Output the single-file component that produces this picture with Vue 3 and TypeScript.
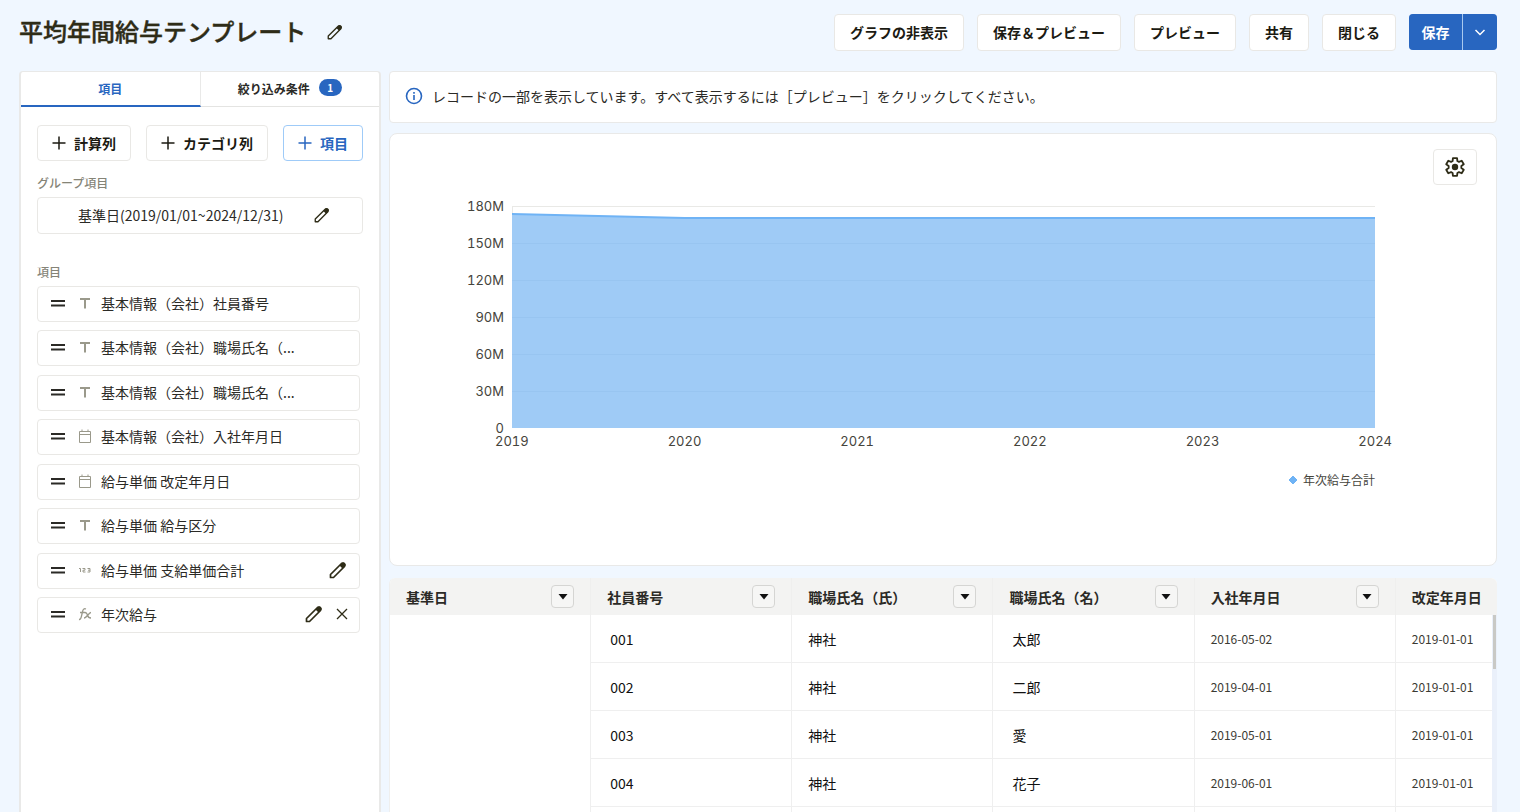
<script setup lang="ts">
type Kind = 'text' | 'date' | 'number' | 'formula'
interface Field { kind: Kind; label: string; edit?: boolean; remove?: boolean }

const fields: Field[] = [
  { kind: 'text', label: '基本情報（会社）社員番号' },
  { kind: 'text', label: '基本情報（会社）職場氏名（...' },
  { kind: 'text', label: '基本情報（会社）職場氏名（...' },
  { kind: 'date', label: '基本情報（会社）入社年月日' },
  { kind: 'date', label: '給与単価 改定年月日' },
  { kind: 'text', label: '給与単価 給与区分' },
  { kind: 'number', label: '給与単価 支給単価合計', edit: true },
  { kind: 'formula', label: '年次給与', edit: true, remove: true },
]

const actions = ['グラフの非表示', '保存＆プレビュー', 'プレビュー', '共有', '閉じる']
const columns = ['基準日', '社員番号', '職場氏名（氏）', '職場氏名（名）', '入社年月日', '改定年月日']
const rows = [
  ['001', '神社', '太郎', '2016-05-02', '2019-01-01'],
  ['002', '神社', '二郎', '2019-04-01', '2019-01-01'],
  ['003', '神社', '愛', '2019-05-01', '2019-01-01'],
  ['004', '神社', '花子', '2019-06-01', '2019-01-01'],
  ['', '', '', '', ''],
]
const yTicks = ['180M', '150M', '120M', '90M', '60M', '30M', '0']
const years = [2019, 2020, 2021, 2022, 2023, 2024]
const pencil = 'M2.500 17.500v-3L13.500 3.500a1.500 1.500 0 0 1 2 0l1 1a1.500 1.500 0 0 1 0 2L5.500 17.500z'
const eraser = 'M11.500 5.500l2.500-2.500a2 2 0 0 1 3 0a2 2 0 0 1 0 3l-2.500 2.500z'

// Outline of a six-toothed gear: outer pair and inner pair of points per tooth.
const gear = Array.from({ length: 6 }, (_, k) =>
  [[-22, 7], [-13, 10], [13, 10], [22, 7]].map(([offset, radius]) => {
    const angle = ((k * 60 + offset) * Math.PI) / 180
    return `${(12 + radius * Math.sin(angle)).toFixed(2)},${(12 - radius * Math.cos(angle)).toFixed(2)}`
  }).join(' '),
).join(' ')
</script>

<template>
  <div class="page">
    <header class="top">
      <h1>平均年間給与テンプレート</h1>
      <button class="bare" aria-label="名前を編集">
        <svg class="pen small" viewBox="0 0 20 20"><path :d="pencil" /><path class="tip" :d="eraser" /></svg>
      </button>
      <div class="actions">
        <button v-for="a in actions" :key="a" class="btn">{{ a }}</button>
        <div class="split">
          <button class="save">保存</button>
          <button class="more" aria-label="保存メニュー">
            <svg viewBox="0 0 12 12"><path d="M1.500 4l4.500 4.500L10.500 4" /></svg>
          </button>
        </div>
      </div>
    </header>

    <div class="body">
      <aside class="side">
        <div class="tabs" role="tablist">
          <button class="tab on" role="tab" aria-selected="true">項目</button>
          <button class="tab" role="tab" aria-selected="false">絞り込み条件<span class="badge">1</span></button>
        </div>
        <div class="side-body">
          <div class="adds">
            <button class="btn add"><svg viewBox="0 0 14 14"><path d="M7 .500v13M.500 7h13" /></svg>計算列</button>
            <button class="btn add"><svg viewBox="0 0 14 14"><path d="M7 .500v13M.500 7h13" /></svg>カテゴリ列</button>
            <button class="btn add primary"><svg viewBox="0 0 14 14"><path d="M7 .500v13M.500 7h13" /></svg>項目</button>
          </div>
          <h2>グループ項目</h2>
          <div class="group">
            <span>基準日(2019/01/01~2024/12/31)</span>
            <button class="bare" aria-label="グループ項目を編集">
              <svg class="pen small" viewBox="0 0 20 20"><path :d="pencil" /><path class="tip" :d="eraser" /></svg>
            </button>
          </div>
          <h2 class="second">項目</h2>
          <ul class="fields">
            <li v-for="(f, i) in fields" :key="i">
              <svg class="grip" viewBox="0 0 14 8"><path d="M0 2h14M0 6.500h14" /></svg>
              <svg v-if="f.kind === 'text'" class="kind" viewBox="0 0 14 14"><path class="thick" d="M2 3h10M7 3v9.500" /></svg>
              <svg v-else-if="f.kind === 'date'" class="kind" viewBox="0 0 14 14"><path d="M1.500 2.500h11v11h-11zM1.500 5.500h11M4 .500v2M10 .500v2" /></svg>
              <svg v-else-if="f.kind === 'number'" class="kind" viewBox="0 0 14 14"><path d="M1 5.500h1.500v3.500M4.500 5.500h2.500v1.700h-2v1.800h2.500M9.500 5.500h2.500v3.500h-2.500M10 7.200h2" /></svg>
              <svg v-else class="kind" viewBox="0 0 14 14"><path class="fx" d="M1 12.500c2 .300 2-1.500 2.500-3.500l1.200-5c.500-2 1.500-2.700 3.300-2M2 5.500h5.500M7 5.500c2 0 2 1 2.500 2.700s1 2.800 3.500 2.800M13 5.500c-2 0-4.500 5.500-7 5.500" /></svg>
              <span class="name">{{ f.label }}</span>
              <button v-if="f.edit" class="bare" aria-label="編集">
                <svg class="pen" viewBox="0 0 20 20"><path :d="pencil" /><path class="tip" :d="eraser" /></svg>
              </button>
              <button v-if="f.remove" class="bare" aria-label="削除">
                <svg class="cross" viewBox="0 0 12 12"><path d="M1 1l10 10M11 1L1 11" /></svg>
              </button>
            </li>
          </ul>
        </div>
      </aside>

      <main class="main">
        <div class="notice">
          <svg viewBox="0 0 18 18"><circle cx="9" cy="9" r="7.500" /><path d="M9 8v5M9 5v1.800" /></svg>
          <span>レコードの一部を表示しています。すべて表示するには［プレビュー］をクリックしてください。</span>
        </div>

        <section class="chart">
          <button class="gear" aria-label="グラフの設定">
            <svg viewBox="0 0 24 24"><polygon :points="gear" /><circle cx="12" cy="12" r="3.500" /></svg>
          </button>
          <div class="plot-row">
            <div class="y"><span v-for="t in yTicks" :key="t">{{ t }}</span></div>
            <svg class="plot" viewBox="0 0 864 222" preserveAspectRatio="none">
              <path class="grid" d="M0 .500h864M.500 0v222" />
              <path class="area" d="M0 8L173 12H864V222H0z" />
              <path class="inner" d="M0 37.500h864M0 74.500h864M0 111.500h864M0 148.500h864M0 185.500h864" />
              <path class="line" d="M0 8L173 12H864" />
            </svg>
          </div>
          <div class="x"><span v-for="y in years" :key="y">{{ y }}</span></div>
          <div class="legend">
            <svg viewBox="0 0 10 10"><path d="M5 1L9 5 5 9 1 5z" /></svg>年次給与合計
          </div>
        </section>

        <div class="table-wrap">
          <table>
            <thead>
              <tr>
                <th v-for="(c, i) in columns" :key="c" scope="col">
                  <div class="th">
                    {{ c }}
                    <button v-if="i < 5" class="menu" :aria-label="c + 'のメニュー'">
                      <svg viewBox="0 0 10 6"><path d="M.500 0h9L5 5.500z" /></svg>
                    </button>
                  </div>
                </th>
              </tr>
            </thead>
            <tbody>
              <tr v-for="(r, i) in rows" :key="i">
                <td v-if="i === 0" :rowspan="rows.length"></td>
                <td v-for="(c, j) in r" :key="j" :class="{ indent: j === 0 || j === 2, date: j > 2 }">{{ c }}</td>
              </tr>
            </tbody>
          </table>
          <div class="scroll"><div class="thumb"></div></div>
        </div>
      </main>
    </div>
  </div>
</template>

<style>
body { background: #f0f7ff; }
</style>

<style scoped>
* { box-sizing: border-box; }
.page {
  height: 100vh;
  overflow: hidden;
  display: flex;
  flex-direction: column;
  background: #f0f7ff;
  color: #2b2a26;
  font: 14px/20px "Noto Sans CJK JP", "Noto Sans", sans-serif;
}
button { font: inherit; color: inherit; cursor: pointer; padding: 0; }
svg { fill: none; stroke: currentColor; display: block; flex: none; }
.top { display: flex; align-items: center; padding: 14px 23px 0 19px; height: 50px; flex: none; }
h1 { margin: 0; font-size: 24px; line-height: 36px; padding-bottom: 2px; font-weight: 500; color: #2e2c17; -webkit-text-stroke: 0.4px; }
.bare { border: 0; background: none; color: #2e2c17; }
.top .bare { margin-left: 20px; }
.pen { width: 20px; height: 20px; stroke-width: 1.7; stroke-linejoin: round; }
.pen.small { width: 18px; height: 18px; stroke-width: 1.5; }
.tip { fill: currentColor; stroke: none; }
.actions { display: flex; gap: 13px; margin-left: auto; }
.btn {
  height: 37px;
  padding: 0 15px;
  border: 1px solid #e9e8e5;
  border-radius: 4px;
  background: #fff;
  color: #1b1a12;
  font-weight: 700;
  white-space: nowrap;
}
.split { display: flex; height: 36px; border-radius: 4px; overflow: hidden; gap: 1px; background: #a9c9ef; color: #fff; font-weight: 700; }
.split button { border: 0; background: #2866c0; }
.save { width: 53px; }
.more { width: 34px; display: grid; place-items: center; }
.more svg { width: 12px; height: 12px; stroke-width: 1.5; }

.body { flex: 1; min-height: 0; display: flex; gap: 8px; padding: 21px 23px 0 19px; }
.side { width: 362px; flex: none; background: #fff; border: 1px solid #e9e9e8; border-width: 1px 2px 0; border-radius: 4px 4px 0 0; }
.tabs { display: flex; height: 35px; }
.tab { flex: 1; display: flex; align-items: center; justify-content: center; gap: 9px; border: 0; border-bottom: 1px solid #e4e4e2; background: none; font-size: 12px; font-weight: 700; }
.tab.on { color: #2866c0; border-bottom: 2px solid #2866c0; border-right: 1px solid #e9e9e8; }
.badge { width: 23px; height: 17px; border-radius: 9px; background: #2866c0; color: #fff; font-size: 10px; line-height: 17px; margin-top: -3px; }
.side-body { padding: 18px 16px 0; }
.adds { display: flex; justify-content: space-between; }
.add { display: flex; align-items: center; gap: 8px; height: 36px; padding: 0 14px; }
.add svg { width: 14px; height: 14px; stroke-width: 1.5; }
.primary { color: #2866c0; border-color: #9fcbf8; }
h2 { margin: 12px 0 4px; font-size: 12px; line-height: 20px; font-weight: 500; color: #858477; }
h2.second { margin: 28px 0 4px; }
.group { display: flex; align-items: center; height: 37px; padding: 0 31px 2px 40px; border: 1px solid #e9e8e5; border-radius: 4px; justify-content: space-between; }
.fields { list-style: none; margin: 0 3px 0 0; padding: 0; height: 347px; display: flex; flex-direction: column; justify-content: space-between; }
.fields li { display: flex; align-items: center; height: 36px; padding: 0 11px 2px 13px; border: 1px solid #e9e8e5; border-radius: 4px; }
.grip { width: 14px; height: 8px; stroke-width: 2; }
.kind { width: 14px; height: 14px; margin: 0 9px 0 13px; color: #9a998b; }
.kind .thick { stroke-width: 2; }
.kind .fx { stroke-width: 1.3; }
.name { flex: 1; white-space: nowrap; }
.fields .bare + .bare { margin-left: 12px; }
.cross { width: 12px; height: 12px; stroke-width: 1.3; }

.main { flex: 1; min-width: 0; display: flex; flex-direction: column; }
.notice { display: flex; align-items: center; gap: 9px; height: 52px; flex: none; padding: 0 15px 2px; background: #fff; border: 1px solid #e9e9e8; border-radius: 4px; }
.notice svg { width: 18px; height: 18px; color: #2866c0; stroke-width: 1.6; }
.chart { position: relative; margin-top: 10px; height: 433px; flex: none; background: #fff; border: 1px solid #e9e9e8; border-radius: 8px; padding: 72px 121px 0 70px; }
.gear { position: absolute; right: 19px; top: 15px; width: 44px; height: 36px; border: 1px solid #e9e8e5; border-radius: 4px; background: #fff; display: grid; place-items: center; color: #2e2c17; }
.gear svg { width: 22px; height: 22px; stroke-width: 2; stroke-linejoin: round; }
.gear circle { fill: currentColor; stroke: none; }
.plot-row { display: flex; gap: 8px; }
.y { width: 44px; display: flex; flex-direction: column; justify-content: space-between; margin: -10px 0; text-align: right; }
.y, .x { font-family: Inter, "Noto Sans", sans-serif; font-size: 13px; font-feature-settings: "tnum"; color: #45443c; }
.plot { flex: 1; min-width: 0; height: 222px; }
.grid { stroke: #e9e9e6; }
.area { fill: #9fcbf6; stroke: none; }
.inner { stroke: #98c5f1; }
.line { stroke: #6fb3f5; stroke-width: 2; }
.x { display: flex; justify-content: space-between; margin: 3px -17px 0 35px; }
.legend { display: flex; justify-content: flex-end; align-items: center; gap: 5px; margin-top: 19px; font-size: 12px; color: #45443c; }
.legend svg { width: 10px; height: 10px; fill: #6fb3f5; stroke: #6fb3f5; stroke-linejoin: round; }

.table-wrap { position: relative; margin-top: 12px; flex: 1; min-height: 0; overflow: hidden; border-radius: 6px 6px 0 0; background: #fff; border-left: 1px solid #efefee; }
table { width: calc(100% + 100px); table-layout: fixed; border-collapse: separate; border-spacing: 0; }
th { height: 37px; padding: 0 16px; background: #f3f3f2; border-right: 1px solid #efefee; text-align: left; font-weight: 700; }
.th { display: flex; align-items: center; justify-content: space-between; white-space: nowrap; }
.menu { width: 23px; height: 23px; border: 1px solid #d5d5d3; border-radius: 4px; background: #f6f6f5; display: grid; place-items: center; color: #111; }
.menu svg { width: 10px; height: 6px; fill: currentColor; stroke: none; }
td { height: 48px; padding: 0 16px; border-right: 1px solid #efefef; border-bottom: 1px solid #efefef; color: #111; }
td.indent { padding-left: 19px; }
td.date { font-size: 12px; color: #3b3a33; }
.scroll { position: absolute; top: 37px; right: 0; bottom: 0; width: 5px; background: #eaf0fa; }
.thumb { width: 3px; height: 54px; margin-left: 1px; background: #c9c9c5; }
</style>
